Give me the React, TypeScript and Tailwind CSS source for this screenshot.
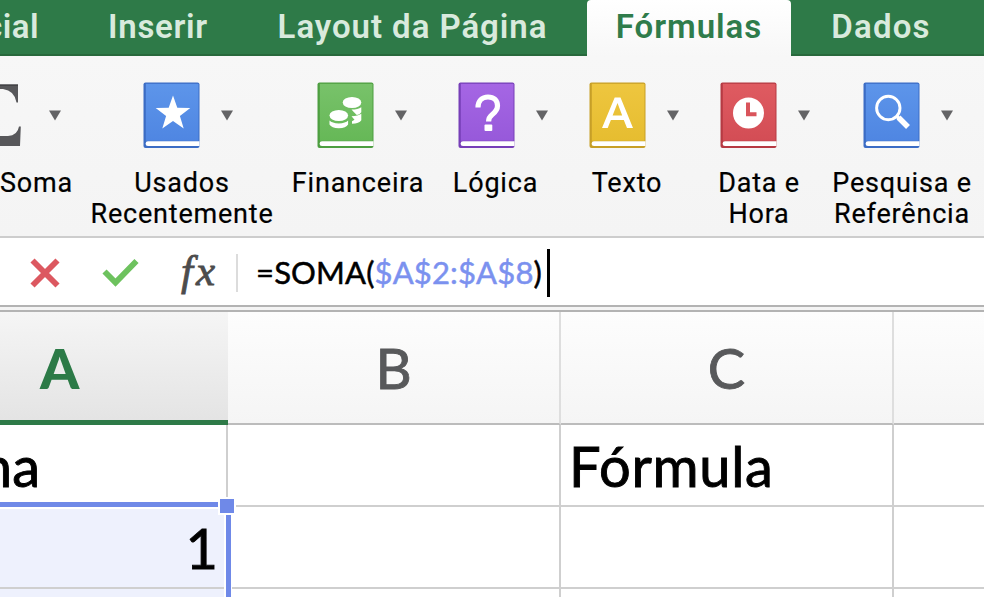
import type { ReactNode } from "react";
import clsx from "clsx";

function Caret() {
  return (
    <svg width="14" height="11" viewBox="0 0 14 11">
      <path d="M1 0.5h12L7 10.5z" fill="#636365" />
    </svg>
  );
}

type BookProps = {
  from: string;
  to: string;
  edge: string;
  children: ReactNode;
};

function Book({ from, to, edge, children }: BookProps) {
  const id = `book-${from.slice(1)}-${edge.slice(1)}`;
  return (
    <svg width="57" height="67" viewBox="0 0 57 67">
      <defs>
        <linearGradient id={id} x1="0" y1="0" x2="0" y2="1">
          <stop offset="0" stopColor={from} />
          <stop offset="1" stopColor={to} />
        </linearGradient>
      </defs>
      <rect x="0.5" y="0.5" width="56" height="65.5" rx="2" fill={edge} />
      <rect x="2.8" y="1.8" width="52.7" height="57" fill={`url(#${id})`} />
      <path d="M56.5 59.3H5a2.4 2.4 0 0 0 0 4.8h51.5z" fill="#fff" />
      {children}
    </svg>
  );
}

const books = [
  {
    label: ["Usados", "Recentemente"],
    box: "ml-[17px] w-[184px]",
    row: "pl-[13px]",
    from: "#5d95ea",
    to: "#4f86e2",
    edge: "#3b6cc4",
    glyph: <path d="M30 13.5l4.3 12.3 13 .3-10.4 7.9 3.8 12.4L30 39l-10.7 7.4 3.8-12.4-10.4-7.9 13-.3z" fill="#fff" />,
  },
  {
    label: ["Financeira"],
    box: "ml-[10px] w-[148px]",
    row: "pl-[9px]",
    from: "#78c26a",
    to: "#66b857",
    edge: "#4d9e40",
    glyph: (
      <g fill="#fff">
        <ellipse cx="35" cy="20.5" rx="9.3" ry="5.6" />
        <path d="M34.5 27.6q6.500 0 9.800-2.400v5q-1.500 2.400-4.500 2.800l-2.800-2.800z" />
        <path d="M34.500 34.200q6.500 0 9.800-2.400v6.500q-2 3.200-9.300 3.500v-2.500l2.500-1.500z" />
        <ellipse cx="21.8" cy="33.5" rx="9.3" ry="5.6" />
        <path d="M12.5 38.500q2.500 2.800 9.300 2.900 6.800-.1 9.300-2.900v4q-2 3.600-9.300 3.700-7.300-.1-9.300-3.700z" />
      </g>
    ),
  },
  {
    label: ["Lógica"],
    box: "w-[127px]",
    row: "pl-[15px]",
    from: "#a566e4",
    to: "#9759da",
    edge: "#773fb8",
    glyph: (
      <g>
        <path d="M20 25.500c0-6.500 4-10.500 10-10.500s9.500 3.700 9.500 8.800c0 4.400-2.400 6.500-5.200 8.700-2.600 2-3.700 3.600-3.700 7" fill="none" stroke="#fff" strokeWidth="5.2" />
        <rect x="26.5" y="42.5" width="7.8" height="6.5" rx="1" fill="#fff" />
      </g>
    ),
  },
  {
    label: ["Texto"],
    box: "ml-[4px] w-[128px]",
    row: "pl-[14px]",
    from: "#eec63f",
    to: "#e6bd30",
    edge: "#c79f27",
    glyph: <path d="M13 46L25.700 15.500h5.800L44 46h-6l-3.200-8H21.900l-3.200 8zM23.600 33.500h9.600L28.500 21z" fill="#fff" fillRule="evenodd" />,
  },
  {
    label: ["Data e", "Hora"],
    box: "ml-[4px] w-[128px]",
    row: "pl-[12px]",
    from: "#df5b61",
    to: "#d34d55",
    edge: "#b63a43",
    glyph: (
      <g>
        <circle cx="28.500" cy="31" r="15.500" fill="#fff" />
        <path d="M28 20.500v11.800h8.500" fill="none" stroke="#d9545b" strokeWidth="4" />
      </g>
    ),
  },
  {
    label: ["Pesquisa e", "Referência"],
    box: "w-[158px]",
    row: "pl-[13px]",
    from: "#5d95ea",
    to: "#4f86e2",
    edge: "#3b6cc5",
    glyph: (
      <g fill="none" stroke="#fff">
        <circle cx="25.3" cy="26" r="11.7" strokeWidth="2.9" />
        <path d="M33.500 34l3.500 3.500" strokeWidth="3.5" />
        <path d="M35.500 35.500l9.500 9.500" strokeWidth="5.5" />
      </g>
    ),
  },
];

function Tabs() {
  return (
    <nav className="flex h-14 items-stretch border-b-2 border-[#28693c] bg-[#2e7a48] font-[Roboto] text-[33px] font-semibold leading-[53px] text-[#d9eadd]">
      <div className="flex w-[73px] justify-end pr-[34px] tracking-[0.5px]">cial</div>
      <div className="w-[170px] text-center tracking-[0.7px]">Inserir</div>
      <div className="w-[339px] text-center tracking-[0.95px] whitespace-nowrap">Layout da Página</div>
      <div className="ml-[5px] -mb-0.5 w-[204px] rounded-t-sm bg-linear-to-b from-white to-[#f7f7f7] text-center tracking-[0.95px] text-[#2f7c4b]">Fórmulas</div>
      <div className="w-[180px] text-center tracking-[1.2px]">Dados</div>
    </nav>
  );
}

function Ribbon() {
  return (
    <section className="flex h-[182px] border-b-2 border-[#cdcdcd] bg-linear-to-b from-[#f7f7f7] to-[#f4f4f4] pt-[26px] font-[Roboto] text-[27px] leading-[30.5px] tracking-[0.8px] text-black [-webkit-text-stroke:0.2px_black]">
      <div className="flex w-[73px] flex-col items-end">
        <div className="flex h-[67px] w-full items-center justify-between">
          <svg width="22" height="67" viewBox="0 0 22 67">
            <path d="M0 2.500H18V20.500H16.500Q14.500 8.500 3 7H0zM0 54H8Q17.500 53.500 19 44.500H20.800L20 64H0z" fill="#57575a" />
            <path d="M0 2.500H18V4H0z" fill="#434346" />
          </svg>
          <span className="mr-[11px] flex">
            <Caret />
          </span>
        </div>
        <span className="mt-[19px]">Soma</span>
      </div>
      {books.map((b) => (
        <div key={b.label[0]} className={clsx("flex flex-col items-center", b.box)}>
          <div className={clsx("flex items-center gap-[20px]", b.row)}>
            <Book from={b.from} to={b.to} edge={b.edge}>
              {b.glyph}
            </Book>
            <Caret />
          </div>
          <div className="mt-[19px] text-center whitespace-nowrap">
            {b.label.map((line) => (
              <div key={line}>{line}</div>
            ))}
          </div>
        </div>
      ))}
    </section>
  );
}

function FormulaBar() {
  return (
    <section className="flex h-[67px] items-center bg-white pt-[2px]">
      <svg className="ml-[30px]" width="30" height="30" viewBox="0 0 30 30">
        <path d="M2.5 2.5l25 25M27.5 2.5L2.5 27.5" stroke="#dc5860" strokeWidth="5.8" />
      </svg>
      <svg className="ml-[42px]" width="38" height="30" viewBox="0 0 38 30">
        <path d="M2.5 13.5L13.5 24.5L34.5 3" fill="none" stroke="#6dc25e" strokeWidth="5.8" />
      </svg>
      <span className="ml-[41px] w-[44px] pb-[5px] font-['Liberation_Serif'] text-[43px] leading-none tracking-[3px] text-[#4c4c4c] italic [-webkit-text-stroke:0.8px_#4c4c4c]">fx</span>
      <div className="ml-[11px] h-[38px] w-0.5 bg-[#dcdcdc]" />
      <div className="ml-[18px] font-[Lato] text-[31px] tracking-[0.15px] whitespace-nowrap text-black [-webkit-text-stroke:0.5px]">
        =SOMA(<span className="text-[#7b91ef]">$A$2:$A$8</span>)
      </div>
      <div className="ml-[5px] h-12 w-[3px] bg-black" />
    </section>
  );
}

function Sheet() {
  return (
    <section className="relative grid grid-cols-[228px_333px_333px_90px] grid-rows-[113px_82px_82px_9px] overflow-hidden bg-white font-[Lato] text-[56px] leading-none text-black [-webkit-text-stroke:0.9px]">
      <div className="flex items-center border-b-[5px] border-[#2e7a48] bg-linear-to-b from-[#f5f5f5] to-[#e4e4e4] pt-[4px] pl-[40px] font-black text-[#2c7a47] [-webkit-text-stroke:0px]">A</div>
      {["B", "C"].map((c) => (
        <div key={c} className="flex items-center justify-center border-r-2 border-b-2 border-r-[#dedede] border-b-[#bcbcbc] bg-linear-to-b from-[#fdfdfd] to-[#f5f5f5] pt-px text-[#58595b]">
          {c}
        </div>
      ))}
      <div className="border-b-2 border-[#bcbcbc] bg-linear-to-b from-[#fdfdfd] to-[#f5f5f5]" />

      <div className="flex items-center justify-end overflow-hidden border-r-2 border-[#cfcfcf] pr-[186px]">Soma</div>
      <div className="border-r-2 border-b-2 border-[#cfcfcf]" />
      <div className="flex items-center border-r-2 border-b-2 border-[#cfcfcf] pt-px pl-[8px] tracking-[0.7px]">Fórmula</div>
      <div className="border-b-2 border-[#cfcfcf]" />

      <div className="flex items-center justify-end border-b-2 border-[#cfcfcf] bg-[#eef1fd] pt-[2px] pr-[10px]">1</div>
      <div className="border-r-2 border-b-2 border-[#cfcfcf]" />
      <div className="border-r-2 border-b-2 border-[#cfcfcf]" />
      <div className="border-b-2 border-[#cfcfcf]" />

      <div className="bg-[#eef1fd]" />
      <div className="border-r-2 border-[#cfcfcf]" />
      <div className="border-r-2 border-[#cfcfcf]" />
      <div />

      {/* range outline and its drag handle */}
      <div className="absolute top-[190px] -left-2 h-[110px] w-[239px] border-[5px] border-[#6f89e8] shadow-[inset_0_0_0_2px_#fff,0_0_0_1px_#fff]" />
      <div className="absolute top-[185px] left-[218px] size-[18px] border-[2.5px] border-white bg-[#6f89e8]" />
    </section>
  );
}

export default function App() {
  return (
    <div className="h-[597px] w-[984px] overflow-hidden bg-white">
      <Tabs />
      <Ribbon />
      <FormulaBar />
      <div className="h-[7px] border-y-2 border-[#b3b3b3] bg-[#f4f4f4]" />
      <Sheet />
    </div>
  );
}
